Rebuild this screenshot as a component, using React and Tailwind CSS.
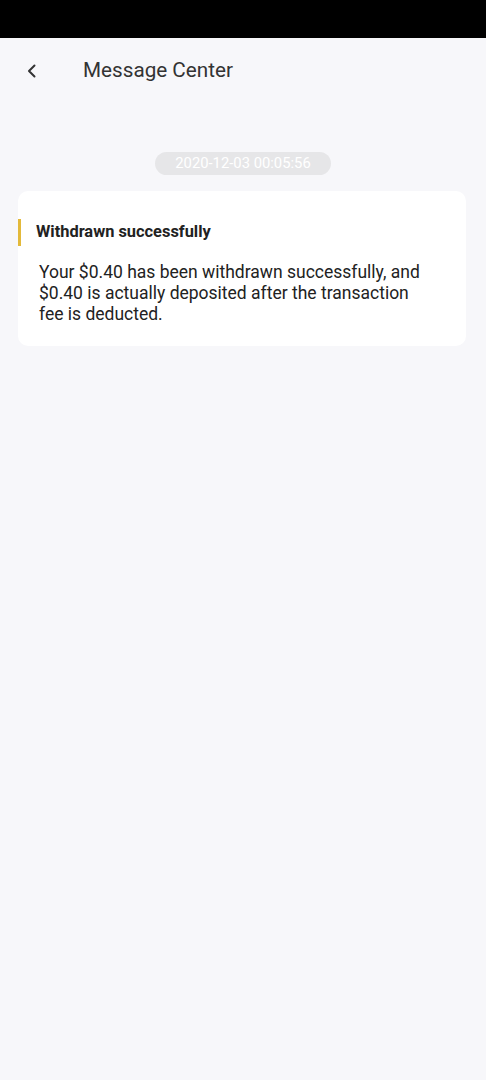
const App = () => {
    return (
        <div className="min-h-[1080px] w-[486px] bg-[#f7f7fa] font-['Roboto',sans-serif]">
            <div className="h-[38px] bg-black" />
            <div className="flex items-center h-[64px] pt-[2px]">
                <button className="w-[64px] pl-[24px] flex items-center text-[#333]">
                    <svg width="16" height="16" viewBox="0 0 16 16" fill="none">
                        <path d="M10.5 2.5L5 8l5.5 5.5" stroke="#333" strokeWidth="2" strokeLinecap="round" strokeLinejoin="round" />
                    </svg>
                </button>
                <h1 className="ml-[19px] text-[20.7px] text-[#333]">Message Center</h1>
            </div>
            <div className="flex justify-center mt-[50px]">
                <span className="px-[20px] h-[23px] leading-[23px] rounded-full bg-[#e6e6e8] text-white text-[14.8px]">
                    2020-12-03 00:05:56
                </span>
            </div>
            <div className="ml-[18px] mr-[20px] mt-[16px] bg-white rounded-[10px] pt-[28px] pb-[21px]">
                <div className="border-l-[3px] border-[#e3b93a] pl-[15px] h-[27px] flex items-center">
                    <h2 className="text-[16.4px] font-bold text-[#222]">Withdrawn successfully</h2>
                </div>
                <p className="mt-[16px] pl-[21px] pr-[40px] text-[17.5px] leading-[21px] text-[#222]">
                    Your $0.40 has been withdrawn successfully, and $0.40 is actually deposited after the transaction fee is deducted.
                </p>
            </div>
        </div>
    );
};

export default App;
